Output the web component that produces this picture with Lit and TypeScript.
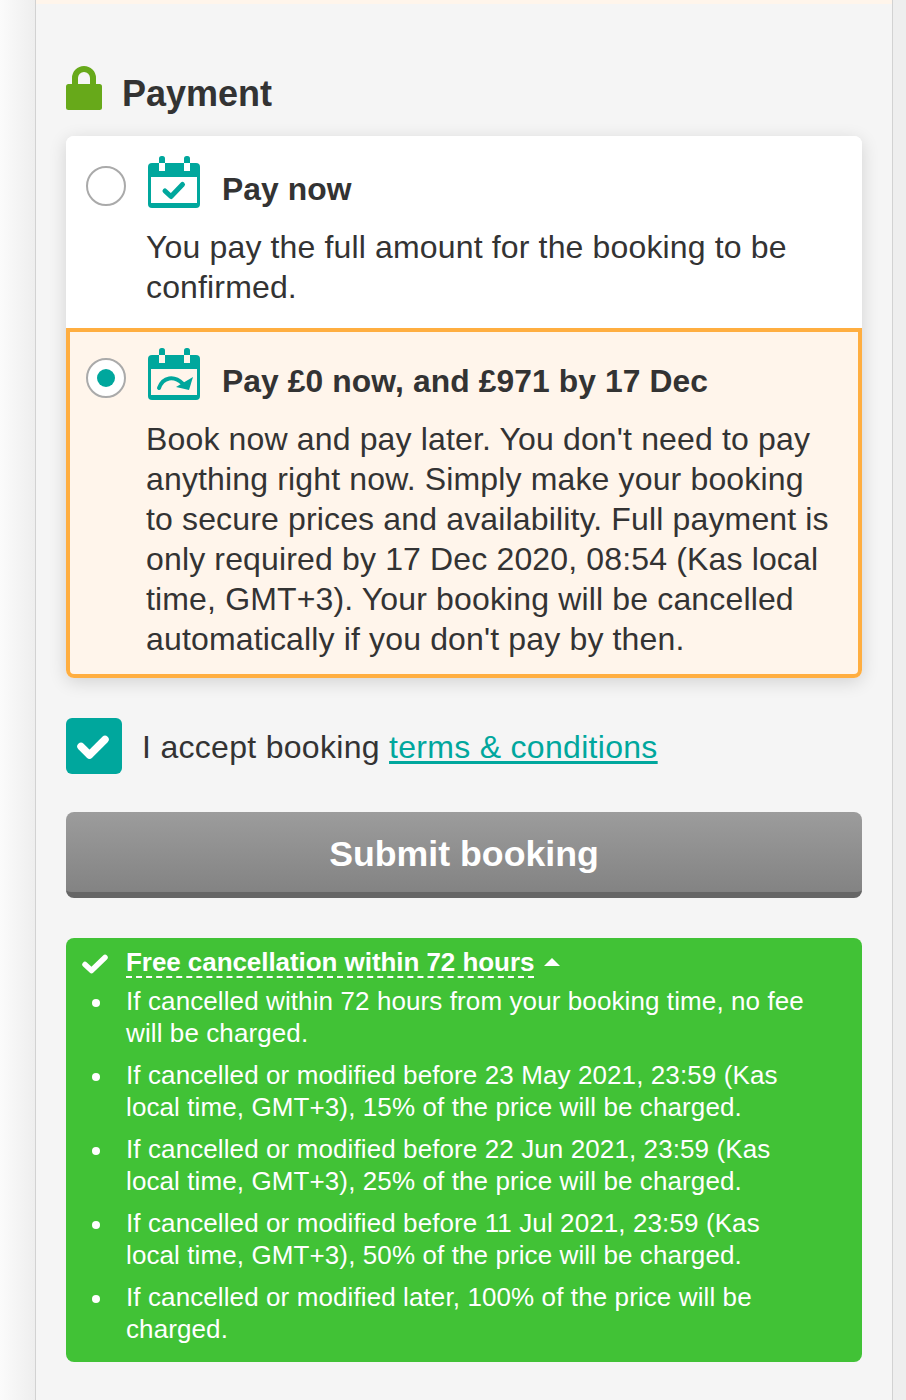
import { LitElement, html, css, svg } from "lit";
import { customElement } from "lit/decorators.js";

const calendar = (inner: unknown) => html`<svg class="cal" viewBox="0 0 56 54" width="56" height="54" aria-hidden="true">
  <rect x="2" y="7" width="52" height="45" rx="4" fill="#00a79d"></rect>
  <rect x="5" y="21" width="46" height="26" fill="var(--panel)"></rect>
  <rect x="13" y="0" width="6" height="10" rx="2.5" fill="#00a79d"></rect>
  <rect x="38" y="0" width="6" height="10" rx="2.5" fill="#00a79d"></rect>
  <rect x="13" y="7" width="6" height="8" fill="var(--panel)"></rect>
  <rect x="38" y="7" width="6" height="8" fill="var(--panel)"></rect>
  ${inner}
</svg>`;

const tick = svg`<path d="M19 35 L25 40.5 L36.5 28.5" fill="none" stroke="#00a79d" stroke-width="5" stroke-linecap="round" stroke-linejoin="round"></path>`;
const later = svg`<path d="M13 40 C17 29 28 27 37 36" fill="none" stroke="#00a79d" stroke-width="4" stroke-linecap="round"></path><path d="M30 39 L47 29 L43 42 Z" fill="#00a79d"></path>`;

const items = [
  ["If cancelled within 72 hours from your booking time, no fee", "will be charged."],
  ["If cancelled or modified before 23 May 2021, 23:59 (Kas", "local time, GMT+3), 15% of the price will be charged."],
  ["If cancelled or modified before 22 Jun 2021, 23:59 (Kas", "local time, GMT+3), 25% of the price will be charged."],
  ["If cancelled or modified before 11 Jul 2021, 23:59 (Kas", "local time, GMT+3), 50% of the price will be charged."],
  ["If cancelled or modified later, 100% of the price will be", "charged."],
];

@customElement("app-root")
export class AppRoot extends LitElement {
  static styles = css`
    :host {
      display: block;
      width: 906px;
      height: 1400px;
      overflow: hidden;
      font-family: "Liberation Sans", Arial, sans-serif;
      color: #333;
      background: #eee;
    }
    .page { display: flex; height: 1400px; }
    .gutter-l { width: 35px; flex: none; background: linear-gradient(90deg, #fbfbfb, #eee); }
    .gutter-r { flex: 1; background: #eee; }
    .panel {
      width: 856px;
      flex: none;
      box-sizing: content-box;
      border-left: 1px solid #d2d2d2;
      border-right: 1px solid #d2d2d2;
      background: #f5f5f5;
    }
    .strip { height: 4px; background: #fff5eb; }
    .content { padding: 62px 30px 0; }
    .heading { display: flex; align-items: center; gap: 20px; height: 44px; }
    .heading h2 { margin: 0; font-size: 36px; line-height: 44px; font-weight: 700; position: relative; top: 6px; }
    .lock { display: block; }
    .card {
      margin-top: 26px;
      border-radius: 8px;
      box-shadow: 0 4px 18px rgba(0, 0, 0, 0.14);
      background: #fff;
    }
    .opt { --panel: #fff; padding: 20px 20px 21px; background: #fff; border-radius: 8px 8px 0 0; }
    .opt.sel {
      --panel: #fff5eb;
      background: #fff5eb;
      border: 4px solid #ffae40;
      border-radius: 0 0 8px 8px;
      padding: 16px 16px 15px;
    }
    .opt-head { display: flex; align-items: flex-start; height: 71px; }
    .radio {
      width: 40px; height: 40px; box-sizing: border-box; flex: none;
      border: 2px solid #aaa; border-radius: 50%; background: #fff;
      margin-top: 10px; display: flex; align-items: center; justify-content: center;
    }
    .radio i { width: 18px; height: 18px; border-radius: 50%; background: #00a79d; display: block; }
    .cal { display: block; margin-left: 20px; flex: none; }
    .opt-title { margin: 14px 0 0 20px; font-size: 31.8px; line-height: 38px; font-weight: 700; letter-spacing: 0.1px; }
    .opt p { margin: 0 0 0 60px; font-size: 32px; line-height: 40px; white-space: nowrap; letter-spacing: 0.15px; }
    .accept { display: flex; align-items: center; gap: 20px; margin-top: 40px; font-size: 32px; line-height: 54px; letter-spacing: 0.3px; }
    .accept div:last-child { padding-top: 2px; }
    .box { width: 56px; height: 56px; border-radius: 6px; background: #00a79d; flex: none; display: flex; align-items: center; justify-content: center; }
    .accept a { color: #00a79d; text-decoration: underline; text-underline-offset: 3px; }
    .submit {
      display: block;
      margin-top: 38px;
      box-sizing: border-box;
      width: 100%;
      height: 86px;
      border: 0;
      border-bottom: 6px solid #666;
      border-radius: 8px;
      background: linear-gradient(180deg, #9c9c9c, #838383);
      color: #fff;
      font: 700 35.7px/84px "Liberation Sans", Arial, sans-serif;
      text-align: center;
      padding: 0;
    }
    .free {
      margin-top: 40px;
      height: 424px;
      box-sizing: border-box;
      border-radius: 8px;
      background: #41c236;
      color: #fff;
      padding: 8px 0 0 60px;
      position: relative;
    }
    .free-head { display: flex; align-items: center; font-size: 26px; line-height: 32px; font-weight: 700; height: 32px; letter-spacing: -0.06px; }
    .free-head span { border-bottom: 2px dashed #fff; line-height: 28px; margin-top: 2px; }
    .free-head .caret { margin-left: 10px; display: block; }
    .free-check { position: absolute; left: 16px; top: 16px; display: block; }
    ul { margin: 7px 0 0; padding: 0; list-style: none; font-size: 26px; line-height: 32px; letter-spacing: 0.1px; }
    li { margin: 0 0 10px; white-space: nowrap; position: relative; }
    li::before {
      content: "";
      position: absolute;
      left: -34px;
      top: 14px;
      width: 8px;
      height: 8px;
      border-radius: 50%;
      background: #fff;
    }
  `;

  render() {
    return html`
      <div class="page">
        <div class="gutter-l"></div>
        <div class="panel">
          <div class="strip"></div>
          <div class="content">
            <div class="heading">
              <svg class="lock" viewBox="0 0 36 44" width="36" height="44" aria-hidden="true">
                <path d="M9 20 V12 A9 9 0 0 1 27 12 V20" fill="none" stroke="#67a91a" stroke-width="6"></path>
                <rect x="0" y="18" width="36" height="26" rx="2.5" fill="#67a91a"></rect>
              </svg>
              <h2>Payment</h2>
            </div>
            <div class="card">
              <div class="opt">
                <div class="opt-head">
                  <div class="radio"></div>
                  ${calendar(tick)}
                  <div class="opt-title">Pay now</div>
                </div>
                <p>You pay the full amount for the booking to be<br />confirmed.</p>
              </div>
              <div class="opt sel">
                <div class="opt-head">
                  <div class="radio"><i></i></div>
                  ${calendar(later)}
                  <div class="opt-title">Pay £0 now, and £971 by 17 Dec</div>
                </div>
                <p>Book now and pay later. You don't need to pay<br />anything right now. Simply make your booking<br />to secure prices and availability. Full payment is<br />only required by 17 Dec 2020, 08:54 (Kas local<br />time, GMT+3). Your booking will be cancelled<br />automatically if you don't pay by then.</p>
              </div>
            </div>
            <div class="accept">
              <div class="box">
                <svg viewBox="0 0 56 56" width="56" height="56" aria-hidden="true">
                  <path d="M15 28.5 L23.5 37 L39 21.5" fill="none" stroke="#fff" stroke-width="7.5" stroke-linecap="round" stroke-linejoin="round"></path>
                </svg>
              </div>
              <div>I accept booking <a href="#">terms &amp; conditions</a></div>
            </div>
            <button class="submit">Submit booking</button>
            <div class="free">
              <svg class="free-check" viewBox="0 0 26 20" width="26" height="20" aria-hidden="true">
                <path d="M3 10.5 L9.5 16.5 L23 3.5" fill="none" stroke="#fff" stroke-width="5.5" stroke-linecap="round" stroke-linejoin="round"></path>
              </svg>
              <div class="free-head">
                <span>Free cancellation within 72 hours</span>
                <svg class="caret" viewBox="0 0 16 8" width="16" height="8" aria-hidden="true"><path d="M0 8 L8 0 L16 8 Z" fill="#fff"></path></svg>
              </div>
              <ul>
                ${items.map((l) => html`<li>${l[0]}<br />${l[1]}</li>`)}
              </ul>
            </div>
          </div>
        </div>
        <div class="gutter-r"></div>
      </div>
    `;
  }
}
